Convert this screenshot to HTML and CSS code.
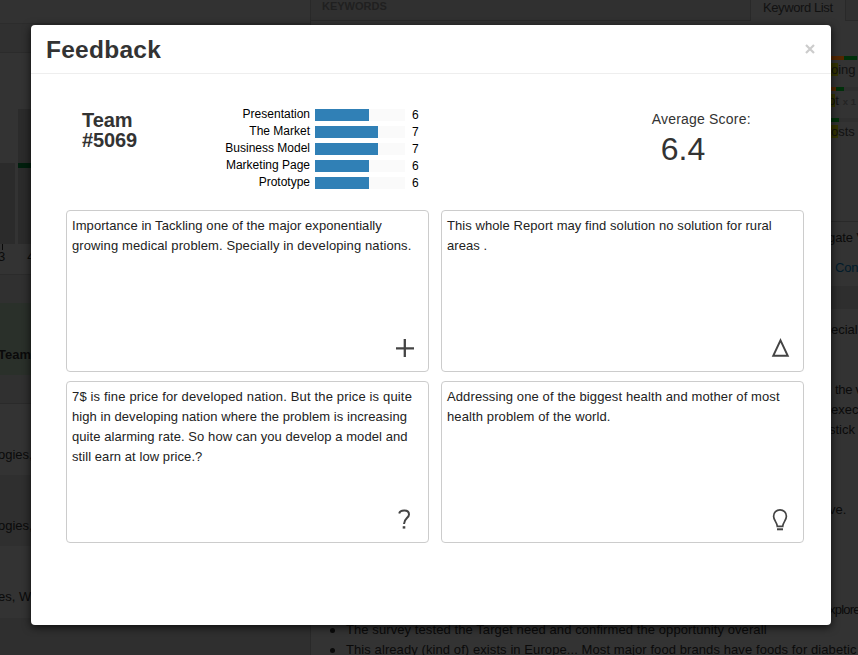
FILE: index.html
```
<!DOCTYPE html>
<html lang="en">
<head>
<meta charset="utf-8">
<title>Feedback</title>
<link rel="stylesheet" href="styles.css">
</head>
<body>
<div class="page">
  <aside class="side">
    <div class="side-top"></div>
    <div class="side-sub"></div>
    <div class="chart">
      <div class="col col-a"></div>
      <div class="col col-b"><div class="mark"></div></div>
    </div>
    <div class="axis"><span class="tick">3</span><span>4</span></div>
    <div class="side-head"></div>
    <div class="team-row">Team</div>
    <div class="side-foot"></div>
    <div class="tag-row">ogies,</div>
    <div class="tag-row alt">ogies,</div>
    <div class="tag-row last">es, W</div>
    <div class="side-end"></div>
  </aside>
  <main class="content">
    <div class="tabs"><span class="tabs-title">KEYWORDS</span><span class="tab">Keyword List</span></div>
    <div class="keywords">
      <div class="keyword"><div class="meter"><i class="orange w13"></i><i class="green w13"></i></div><p><mark>o</mark>ing</p></div>
      <div class="keyword"><div class="meter"><i class="orange w5"></i><i class="green w8"></i></div><p class="pull"><mark>p</mark>t<small>x 1</small></p></div>
      <div class="keyword"><div class="meter"><i class="green w8"></i></div><p><mark>o</mark>sts</p></div>
    </div>
    <div class="nav"><p class="nav-title">gate V</p><p class="nav-link">Con</p></div>
    <div class="band"></div>
    <div class="notes">
      <p>ecial</p>
      <p class="skip2 in">the v</p>
      <p>exec</p>
      <p class="cut">stick</p>
      <p class="skip3 cut">ve.</p>
      <p class="skip4 cut">xplore</p>
    </div>
    <ul class="bullets">
      <li>The survey tested the Target need and confirmed the opportunity overall</li>
      <li>This already (kind of) exists in Europe... Most major food brands have foods for diabetic</li>
    </ul>
  </main>
</div>

<section class="modal">
  <header class="modal-head">
    <h1>Feedback</h1>
    <button class="close" aria-label="Close"><svg width="10" height="10" viewBox="0 0 10 10"><path d="M1 1L9 9M9 1L1 9"/></svg></button>
  </header>
  <div class="summary">
    <h2>Team<br>#5069</h2>
    <div class="scores">
      <span class="label">Presentation</span><div class="bar"><div class="six"></div></div><span>6</span>
      <span class="label">The Market</span><div class="bar"><div class="seven"></div></div><span>7</span>
      <span class="label">Business Model</span><div class="bar"><div class="seven"></div></div><span>7</span>
      <span class="label">Marketing Page</span><div class="bar"><div class="six"></div></div><span>6</span>
      <span class="label">Prototype</span><div class="bar"><div class="six"></div></div><span>6</span>
    </div>
    <div class="average"><p>Average Score:</p><strong>6.4</strong></div>
  </div>
  <div class="cards">
    <article class="card"><p><span class="t1">Importance in Tackling one of the major exponentially</span><br><span class="t2">growing medical problem. Specially in developing nations.</span></p>
      <svg class="icon" width="24" height="24" viewBox="0 0 24 24"><path d="M3 12.3H21M11.8 3V21" stroke-width="2.3"/></svg></article>
    <article class="card"><p class="t1">This whole Report may find solution no solution for rural<br>areas .</p>
      <svg class="icon" width="24" height="24" viewBox="0 0 24 24"><path d="M12.5 4.3L19.7 19.7H5.3Z" stroke-width="2"/></svg></article>
    <article class="card"><p class="t1"><span class="t3">7$ is fine price for developed nation. But the price is quite</span><br>high in developing nation where the problem is increasing<br>quite alarming rate. So how can you develop a model and<br>still earn at low price.?</p>
      <svg class="icon" width="24" height="24" viewBox="0 0 24 24"><path d="M6.2 6.4C7.2 2.6 16 2.2 16 7.4C16 11 11 11.4 11 17" stroke-width="2"/><path d="M11 19.2V21.6" stroke-width="2.6"/></svg></article>
    <article class="card"><p class="t2">Addressing one of the biggest health and mother of most<br>health problem of the world.</p>
      <svg class="icon" width="24" height="24" viewBox="0 0 24 24"><path d="M9.3 19.3C9.3 15.5 5.6 13.5 5.6 9.2C5.6 5.4 8.4 2.8 12 2.8S18.4 5.4 18.4 9.2C18.4 13.5 14.7 15.5 14.7 19.3Z" stroke-width="1.7"/><path d="M9 22.3H15" stroke-width="2"/></svg></article>
  </div>
</section>
</body>
</html>
```
FILE: styles.css
```
* { box-sizing: border-box; }
body, p, h1, h2, ul { margin: 0; padding: 0; }
body {
  width: 858px;
  height: 655px;
  overflow: hidden;
  background: #333;
  font: 13px/20px "Liberation Sans", Arial, sans-serif;
  color: #0a0a0a;
}
.page { display: flex; height: 655px; overflow: hidden; white-space: nowrap; }
.side { width: 311px; flex: none; border-right: 1px solid #292929; overflow: hidden; }
.side-top { height: 24px; background: #323232; border-bottom: 1px solid #2c2c2c; }
.side-sub { height: 29px; background: #303030; border-bottom: 1px solid #2b2b2b; }
.chart { height: 191px; display: flex; align-items: flex-end; gap: 3px; }
.col-a { width: 15px; height: 81px; background: #2b2b2b; }
.col-b { width: 40px; height: 135px; padding-top: 54px; background: #2b2b2b; }
.mark { height: 5px; background: #001f0d; }
.axis { height: 31px; display: flex; gap: 22px; border-bottom: 1px solid #2b2b2b; line-height: 26px; }
.axis span:first-child { margin-left: -2px; }
.tick { background: linear-gradient(#0a0a0a, #0a0a0a) 4px 0 / 1px 6px no-repeat; }
.side-head { height: 28px; background: #303030; }
.team-row { height: 72px; padding-top: 42px; text-indent: -2px; background: #2a302a; font-weight: bold; }
.side-foot { height: 29px; background: #303030; border-bottom: 1px solid #2a2a2a; }
.tag-row { height: 71px; padding-top: 41px; text-indent: -2px; }
.tag-row.alt { background: #2f2f2f; }
.tag-row.last { height: 72px; }
.side-end { height: 38px; background: #2f2f2f; }

.content { flex: 1; min-width: 0; overflow: hidden; }
.tabs { height: 21px; display: flex; justify-content: space-between; background: #303030; border-bottom: 1px solid #292929; }
.tabs-title { margin-left: 11px; font-size: 11px; line-height: 12px; font-weight: bold; color: #202020; }
.tab { width: 96px; height: 21px; margin-right: 12px; padding-left: 12px; line-height: 16px; background: #333; border: 1px solid #292929; border-width: 0 1px; color: #111; letter-spacing: -.4px; }
.keywords { height: 201px; padding: 35px 0 0 520px; border-bottom: 1px solid #292929; }
.keyword { height: 31px; }
.meter { display: flex; height: 4px; background: #2f2f2f; }
.orange { background: #522600; }
.green { background: #00300a; }
.w13 { width: 13px; }
.w5 { width: 5px; }
.w8 { width: 8px; }
.keyword p { color: #111; }
.keyword .pull { margin-left: -3px; }
mark { display: inline-block; height: 13px; line-height: 13px; background: #343400; color: #111; }
small { margin-left: 4px; font-size: 9.5px; font-weight: bold; color: #242424; }
.nav { height: 64px; padding: 6px 0 0 520px; }
.nav-title { margin-left: -3px; letter-spacing: -.1px; }
.nav-link { margin-top: 10px; padding-left: 4px; color: #001b2b; letter-spacing: -.2px; }
.band { height: 23px; background: #2e2e2e; }
.notes { padding: 11px 0 0 520px; }
.notes .in { padding-left: 4px; letter-spacing: -.3px; }
.notes .cut { margin-left: -2px; }
.notes p:last-child { letter-spacing: -.8px; }
.notes .skip2 { margin-top: 40px; }
.notes .skip3 { margin-top: 60px; }
.notes .skip4 { margin-top: 80px; }
.bullets { padding-left: 19px; list-style: none; }
.bullets li { display: flex; align-items: center; gap: 11px; letter-spacing: .085px; }
.bullets li::before { content: ""; width: 5px; height: 5px; border-radius: 50%; background: #0a0a0a; }

.modal {
  position: absolute;
  left: 31px;
  top: 25px;
  width: 800px;
  height: 600px;
  background: #fff;
  border-radius: 4px;
  box-shadow: 0 2px 9px rgba(0, 0, 0, .75);
  color: #222;
}
.modal-head { height: 49px; padding: 0 15px; display: flex; justify-content: space-between; border-bottom: 1px solid #eee; }
h1 { font-size: 24.5px; line-height: 49px; letter-spacing: .25px; color: #333; }
.close { width: 12px; height: 12px; margin-top: 18px; padding: 1px; border: 0; background: none; }
.close svg { display: block; fill: none; stroke: #ccc; stroke-width: 2.2; }
.summary { height: 136px; padding: 32px 0 0 51px; display: flex; align-items: flex-start; }
h2 { width: 139px; margin-top: 4px; font-size: 20px; line-height: 20px; color: #333; letter-spacing: -.1px; }
.scores { display: grid; grid-template-columns: 89px 90px auto; grid-auto-rows: 17px; column-gap: 5px; line-height: 18px; color: #000; font-size: 12px; }
.scores .label { text-align: right; line-height: 17px; }
.scores span:not(.label) { padding-left: 2px; }
.bar { height: 12px; margin-top: 3px; background: #fafafa; }
.bar div { height: 12px; background: #3080b6; }
.six { width: 54px; }
.seven { width: 63px; }
.average { margin-left: 233px; font-size: 14px; letter-spacing: .2px; color: #333; white-space: nowrap; }
.average p { margin-top: 3px; }
.average strong { display: block; margin-left: 9px; font-size: 32px; line-height: 40px; font-weight: normal; letter-spacing: 0; }
.cards { display: grid; grid-template-columns: 363px 363px; grid-auto-rows: 162px; gap: 9px 12px; padding-left: 35px; }
.card { display: flex; flex-direction: column; justify-content: space-between; padding: 5px; border: 1px solid #ccc; border-radius: 4px; white-space: nowrap; }
.t1 { letter-spacing: .07px; }
.t2 { letter-spacing: .11px; }
.t3 { letter-spacing: .16px; }
.icon { align-self: flex-end; margin: 0 6px 6px 0; fill: none; stroke: #444; }
```
